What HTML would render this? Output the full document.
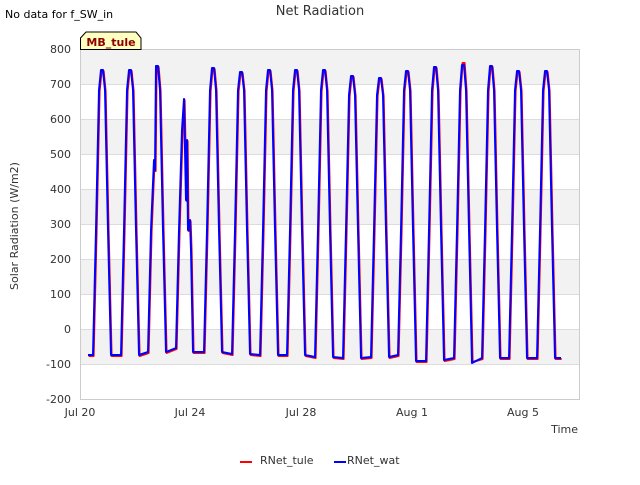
<!DOCTYPE html>
<html><head><style>
body{margin:0;background:#fff;width:640px;height:480px;overflow:hidden;font-family:"Liberation Sans","DejaVu Sans",sans-serif}
</style></head><body>
<svg width="640" height="480" xmlns="http://www.w3.org/2000/svg" font-family="DejaVu Sans, Liberation Sans, sans-serif">
<rect width="640" height="480" fill="#fff"/>
<g fill="#f2f2f2">
<rect x="80" y="49" width="500" height="35"/>
<rect x="80" y="119" width="500" height="35"/>
<rect x="80" y="189" width="500" height="35"/>
<rect x="80" y="259" width="500" height="35"/>
<rect x="80" y="329" width="500" height="35"/>
</g>
<g stroke="#dcdcdc" stroke-width="1">
<line x1="80" x2="580" y1="84.5" y2="84.5"/><line x1="80" x2="580" y1="119.5" y2="119.5"/>
<line x1="80" x2="580" y1="154.5" y2="154.5"/><line x1="80" x2="580" y1="189.5" y2="189.5"/>
<line x1="80" x2="580" y1="224.5" y2="224.5"/><line x1="80" x2="580" y1="259.5" y2="259.5"/>
<line x1="80" x2="580" y1="294.5" y2="294.5"/><line x1="80" x2="580" y1="329.5" y2="329.5"/>
<line x1="80" x2="580" y1="364.5" y2="364.5"/>
</g>
<rect x="80.5" y="49.5" width="499" height="350" fill="none" stroke="#ccc"/>
<g font-size="11" fill="#333" text-anchor="end">
<text x="71" y="53">800</text><text x="71" y="88">700</text><text x="71" y="123">600</text>
<text x="71" y="158">500</text><text x="71" y="193">400</text><text x="71" y="228">300</text>
<text x="71" y="263">200</text><text x="71" y="298">100</text><text x="71" y="333">0</text>
<text x="71" y="368">-100</text><text x="71" y="403">-200</text>
</g>
<g font-size="11" fill="#333" text-anchor="middle">
<text x="80" y="416">Jul 20</text><text x="190" y="416">Jul 24</text><text x="301" y="416">Jul 28</text>
<text x="412" y="416">Aug 1</text><text x="523" y="416">Aug 5</text>
</g>
<text x="578" y="433" font-size="11" fill="#333" text-anchor="end">Time</text>
<text x="18" y="226" font-size="11" fill="#333" text-anchor="middle" transform="rotate(-90 18 226)">Solar Radiation (W/m2)</text>
<text x="320" y="15" font-size="13" fill="#333" text-anchor="middle">Net Radiation</text>
<text x="5" y="18" font-size="11" fill="#000">No data for f_SW_in</text>
<path d="M80.5,49.5 L80.5,38 L86,32 L136,32 L141,38 L141,49.5 Z" fill="#ffffc0" stroke="#000" stroke-width="1"/>
<text x="111" y="46" font-size="11" font-weight="bold" fill="#8b0000" text-anchor="middle">MB_tule</text>
<g fill="none" stroke-width="2" stroke-linejoin="round">
<path stroke="#f00" transform="translate(0.6,1)" d="M88,355 L93,355 L96,230 L99,90 L101,70 L103,70 L105,90 L108,230 L111,355 L121,355 L124,230 L127,90 L129,70 L131,70 L133,90 L136,230 L139,355 L148,352 L151,230 L154,160 L155,170 L156,66 L158,66 L160,90 L163,230 L166,352 L176,348 L179,230 L182,130 L184,99 L186,200 L187,140 L188,230 L190,220 L191,250 L193,352 L204,352 L207,230 L210,90 L212,68 L214,68 L216,90 L219,230 L222,352 L232,354 L235,230 L238,90 L240,72 L242,72 L244,90 L247,230 L250,354 L260,355 L263,230 L266,90 L268,70 L270,70 L272,90 L275,230 L278,355 L287,355 L290,230 L293,90 L295,70 L297,70 L299,90 L302,230 L305,355 L315,357 L318,230 L321,90 L323,70 L325,70 L327,90 L330,230 L333,357 L343,358 L346,230 L349,95 L351,76 L353,76 L355,95 L358,230 L361,358 L371,357 L374,230 L377,95 L379,78 L381,78 L383,95 L386,230 L389,357 L398,355 L401,230 L404,90 L406,71 L408,71 L410,90 L413,230 L416,361 L426,361 L429,230 L432,90 L434,67 L436,67 L438,90 L441,230 L444,360 L454,358 L457,230 L460,90 L462,62 L464,62 L466,90 L469,230 L472,361 L482,358 L485,230 L488,90 L490,66 L492,66 L494,90 L497,230 L500,358 L509,358 L512,230 L515,90 L517,71 L519,71 L521,90 L524,230 L527,358 L537,358 L540,230 L543,90 L545,71 L547,71 L549,90 L552,230 L555,358 L561,358"/>
<path stroke="#00f" d="M88,355 L93,355 L96,230 L99,90 L101,70 L103,70 L105,90 L108,230 L111,355 L121,355 L124,230 L127,90 L129,70 L131,70 L133,90 L136,230 L139,355 L148,352 L151,230 L154,160 L155,170 L156,66 L158,66 L160,90 L163,230 L166,352 L176,348 L179,230 L182,130 L184,99 L186,200 L187,140 L188,230 L190,220 L191,250 L193,352 L204,352 L207,230 L210,90 L212,68 L214,68 L216,90 L219,230 L222,352 L232,354 L235,230 L238,90 L240,72 L242,72 L244,90 L247,230 L250,354 L260,355 L263,230 L266,90 L268,70 L270,70 L272,90 L275,230 L278,355 L287,355 L290,230 L293,90 L295,70 L297,70 L299,90 L302,230 L305,355 L315,357 L318,230 L321,90 L323,70 L325,70 L327,90 L330,230 L333,357 L343,358 L346,230 L349,95 L351,76 L353,76 L355,95 L358,230 L361,358 L371,357 L374,230 L377,95 L379,78 L381,78 L383,95 L386,230 L389,357 L398,355 L401,230 L404,90 L406,71 L408,71 L410,90 L413,230 L416,361 L426,361 L429,230 L432,90 L434,67 L436,67 L438,90 L441,230 L444,360 L454,358 L457,230 L460,90 L462,65 L464,65 L466,90 L469,230 L472,363 L482,358 L485,230 L488,90 L490,66 L492,66 L494,90 L497,230 L500,358 L509,358 L512,230 L515,90 L517,71 L519,71 L521,90 L524,230 L527,358 L537,358 L540,230 L543,90 L545,71 L547,71 L549,90 L552,230 L555,358 L561,358"/>
</g>
<line x1="240" x2="252" y1="462" y2="462" stroke="#f00" stroke-width="2"/>
<text x="260" y="464" font-size="11" fill="#333">RNet_tule</text>
<line x1="334" x2="346" y1="462" y2="462" stroke="#00f" stroke-width="2"/>
<text x="347" y="464" font-size="11" fill="#333">RNet_wat</text>
</svg>
</body></html>
